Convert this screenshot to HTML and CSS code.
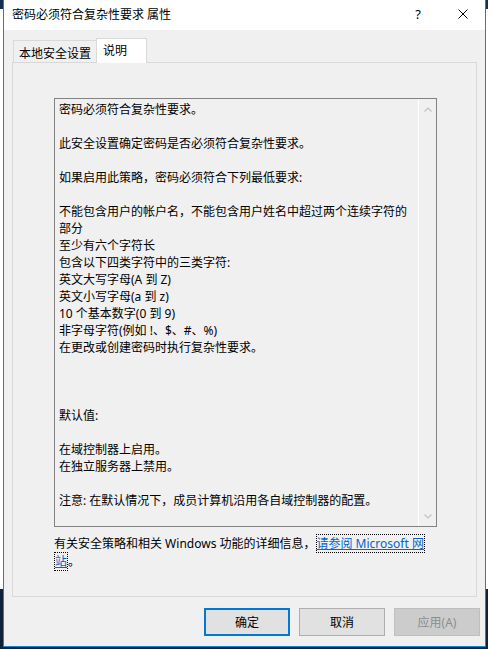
FILE: index.html
```html
<!DOCTYPE html>
<html lang="zh-CN">
<head>
    <meta charset="UTF-8">
    <title>密码必须符合复杂性要求 属性</title>
    <link rel="stylesheet" href="styles.css">
</head>
<body>

    <div class="window">
        <div class="titlebar">
            <span class="title">密码必须符合复杂性要求 属性</span>
            <span class="tb-btn help">?</span>
            <span class="tb-btn close">
                <svg width="10" height="10" viewBox="0 0 10 10"><path d="M0.5 0.5L9.5 9.5M9.5 0.5L0.5 9.5" stroke="#000" stroke-width="1" fill="none"/></svg>
            </span>
        </div>

        <div class="client">
            <div class="tabs">
                <div class="tab">本地安全设置</div>
                <div class="tab active">说明</div>
            </div>

            <div class="panel">
                <div class="textbox">
                    <div class="text">密码必须符合复杂性要求。

此安全设置确定密码是否必须符合复杂性要求。

如果启用此策略，密码必须符合下列最低要求:

不能包含用户的帐户名，不能包含用户姓名中超过两个连续字符的部分
至少有六个字符长
包含以下四类字符中的三类字符:
英文大写字母(A 到 Z)
英文小写字母(a 到 z)
10 个基本数字(0 到 9)
非字母字符(例如 !、$、#、%)
在更改或创建密码时执行复杂性要求。



默认值:

在域控制器上启用。
在独立服务器上禁用。

注意: 在默认情况下，成员计算机沿用各自域控制器的配置。</div>
                    <div class="scrollbar">
                        <svg width="8" height="5" viewBox="0 0 8 5"><polyline points="0.5,4.5 4,1 7.5,4.5" stroke="#c2c2c2" stroke-width="1.2" fill="none"/></svg>
                        <svg width="8" height="5" viewBox="0 0 8 5"><polyline points="0.5,0.5 4,4 7.5,0.5" stroke="#c2c2c2" stroke-width="1.2" fill="none"/></svg>
                    </div>
                </div>

                <p class="more">有关安全策略和相关 Windows 功能的详细信息，<a href="#">请参阅 Microsoft 网站</a>。</p>
            </div>

            <div class="buttons">
                <button class="btn default">确定</button>
                <button class="btn">取消</button>
                <button class="btn" disabled>应用(A)</button>
            </div>
        </div>
    </div>

</body>
</html>
```

FILE: styles.css
```css
body {
    margin: 0;
    padding-left: 3px;
    height: 649px;
    overflow: hidden;
    font-family: "Noto Sans", "Noto Sans CJK SC", sans-serif;
    font-size: 12px;
    color: #000;
    background: linear-gradient(#12304f 0, #12304f 9px, #fff 9px, #fff 589px, #0f2238 589px);
}

.window {
    width: 483px;
    height: 647px;
    box-sizing: border-box;
    border: 1px solid #1883d7;
    border-top: none;
    background-color: #f0f0f0;
    display: flex;
    flex-direction: column;
}

/* title bar */
.titlebar {
    height: 30px;
    flex-shrink: 0;
    background-color: #fff;
    display: flex;
    align-items: center;
}

.title {
    flex: 1;
    padding: 0 0 2px 8px;
    line-height: 17px;
}

.tb-btn {
    width: 46px;
    height: 30px;
    display: flex;
    align-items: center;
    justify-content: center;
    padding-bottom: 2px;
    box-sizing: border-box;
}

.help {
    font-size: 13px;
}

.close {
    width: 44px;
}

/* client area */
.client {
    flex: 1;
    padding: 8px 8px 0;
    display: flex;
    flex-direction: column;
}

.tabs {
    display: flex;
    align-items: flex-end;
    margin-bottom: -1px;
    position: relative;
    z-index: 1;
}

.tab {
    width: 83px;
    height: 22px;
    box-sizing: border-box;
    margin: 0 0 1px 1px;
    padding: 4px 5px 0;
    line-height: 17px;
    border: 1px solid #d9d9d9;
    border-right: none;
    border-bottom: none;
    background-color: #f0f0f0;
}

.tab.active {
    width: 51px;
    height: 25px;
    margin: 0;
    padding: 3px 6px 0;
    background-color: #fff;
    border-right: 1px solid #d9d9d9;
}

.panel {
    height: 535px;
    box-sizing: border-box;
    border: 1px solid #d9d9d9;
    padding: 35px 0 0 41px;
}

.textbox {
    width: 383px;
    height: 429px;
    box-sizing: border-box;
    border: 1px solid #828282;
    display: flex;
}

.text {
    flex: 1;
    padding: 2px 0 0 4px;
    line-height: 17px;
    white-space: pre-line;
    overflow: hidden;
}

.scrollbar {
    width: 17px;
    border-left: 1px solid #fff;
    display: flex;
    flex-direction: column;
    justify-content: space-between;
    align-items: center;
    padding: 8px 0 7px;
}

.scrollbar svg {
    display: block;
}

.more {
    width: 383px;
    margin: 8px 0 0;
    line-height: 18px;
}

.more a {
    color: #0066cc;
    text-decoration: underline;
    border: 1px dotted #000;
    -webkit-box-decoration-break: clone;
    box-decoration-break: clone;
}

/* dialog buttons */
.buttons {
    display: flex;
    justify-content: flex-end;
    gap: 9px;
    margin: 11px -3px 0 0;
}

.btn {
    width: 86px;
    height: 28px;
    padding: 0;
    font: inherit;
    color: #000;
    background-color: #e1e1e1;
    border: 1px solid #adadad;
}

.btn.default {
    border: 2px solid #0078d7;
}

.btn:disabled {
    background-color: #cccccc;
    border-color: #bfbfbf;
    color: #8d8d8d;
}
```
